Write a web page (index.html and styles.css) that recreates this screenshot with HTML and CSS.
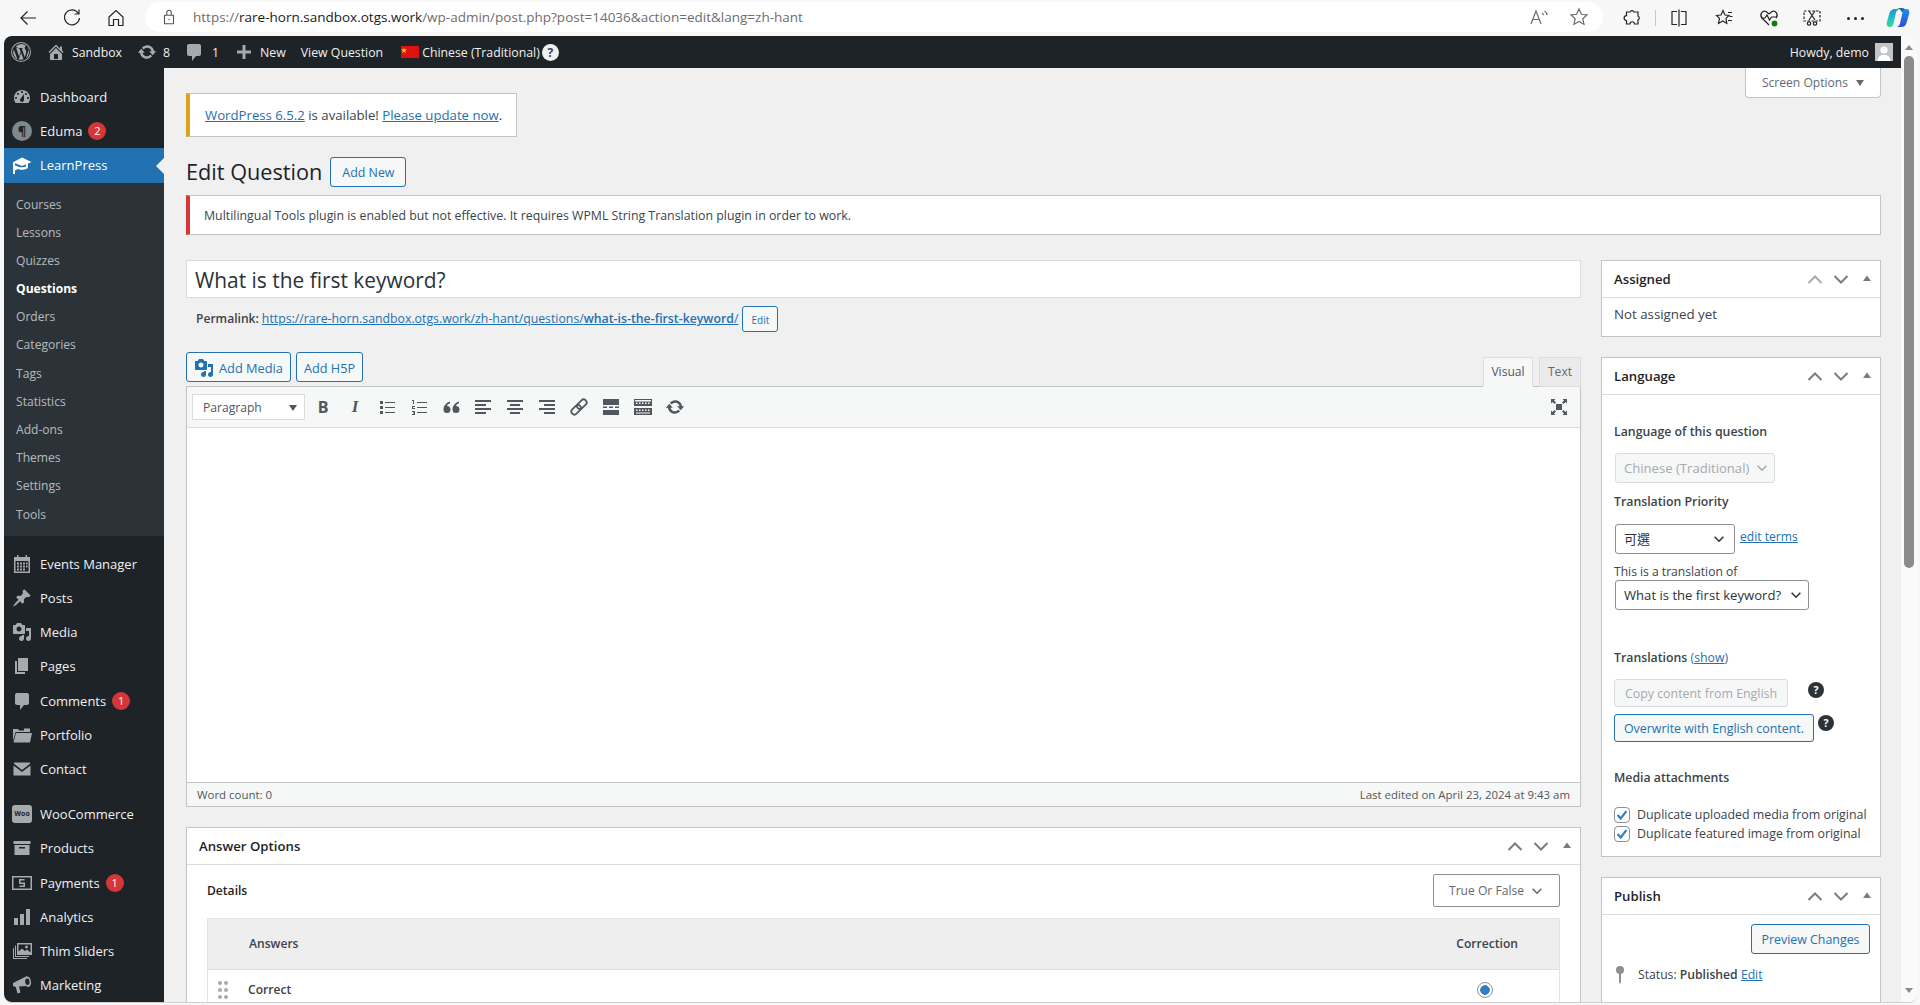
FILE: index.html
```html
<!DOCTYPE html>
<html lang="en">
<head>
<meta charset="utf-8">
<title>Edit Question</title>
<link rel="stylesheet" href="styles.css">
</head>
<body>
<svg class="sprite" xmlns="http://www.w3.org/2000/svg">
  <symbol id="i-home" viewBox="0 0 20 20"><path d="M16 8.5l1.53 1.53-1.06 1.06L10 4.62l-6.47 6.47-1.06-1.06L10 2.5l4 4v-2h2v4zm-6-2.46l6 5.99V18H4v-5.97zM12 17v-5H8v5h4z"/></symbol>
  <symbol id="i-update" viewBox="0 0 20 20"><path d="M10.2 3.28c3.53 0 6.43 2.61 6.92 6h2.08l-3.5 4-3.5-4h2.32c-.45-1.97-2.21-3.45-4.32-3.45-1.45 0-2.73.71-3.54 1.78L4.95 5.66C6.23 4.2 8.11 3.28 10.2 3.28zm-.4 13.44c-3.52 0-6.43-2.61-6.92-6H.8l3.5-4c1.17 1.33 2.33 2.67 3.5 4H5.48c.45 1.97 2.21 3.45 4.32 3.45 1.45 0 2.73-.71 3.54-1.78l1.71 1.95c-1.28 1.46-3.15 2.38-5.25 2.38z"/></symbol>
  <symbol id="i-comment" viewBox="0 0 20 20"><path d="M5 2h10c1.1 0 2 .9 2 2v8c0 1.1-.9 2-2 2h-3l-4 5v-5H5c-1.1 0-2-.9-2-2V4c0-1.1.9-2 2-2z"/></symbol>
  <symbol id="i-plus" viewBox="0 0 20 20"><path d="M17 8.500v3h-5.500V17h-3v-5.500H3v-3h5.500V3h3v5.500z"/></symbol>
  <symbol id="i-dash" viewBox="0 0 20 20"><path fill-rule="evenodd" d="M3.76 16h12.48c1.1-1.37 1.76-3.11 1.76-5 0-4.42-3.58-8-8-8s-8 3.58-8 8c0 1.89.66 3.63 1.76 5zM10 4c.55 0 1 .45 1 1s-.45 1-1 1-1-.45-1-1 .45-1 1-1zM6 6c.55 0 1 .45 1 1s-.45 1-1 1-1-.45-1-1 .45-1 1-1zm8 0c.55 0 1 .45 1 1s-.45 1-1 1-1-.45-1-1 .45-1 1-1zm-5.370 5.550L12 7v6c0 1.100-.9 2-2 2s-2-.9-2-2c0-.57.24-1.080.63-1.450zM4 10c.55 0 1 .45 1 1s-.45 1-1 1-1-.45-1-1 .45-1 1-1zm12 0c.55 0 1 .45 1 1s-.45 1-1 1-1-.45-1-1 .45-1 1-1z"/></symbol>
  <symbol id="i-cap" viewBox="0 0 20 20"><path d="M10 2.500L19.500 7 10 11 3 8.200v2.300l3 .9 0 0c0 0 1.500.9 4 .9s4-1 4-1v-2l2-.8V13c0 0-2.500 1.800-6 1.800-1.500 0-3-.4-4-.8l-3 1.500V19H1V7.300z"/></symbol>
  <symbol id="i-cal" viewBox="0 0 20 20"><path fill-rule="evenodd" d="M5 1h1.500v2h7V1H15v2h3v16H2V3h3zM3.500 7v10.500h13V7z"/><path d="M5 8.500h2v2H5zm3 0h2v2H8zm3 0h2v2h-2zm3 0h1.500v2H14zM5 11.500h2v2H5zm3 0h2v2H8zm3 0h2v2h-2zm3 0h1.500v2H14zM5 14.500h2v2H5zm3 0h2v2H8zm3 0h2v2h-2z"/></symbol>
  <symbol id="i-pin" viewBox="0 0 20 20"><path d="M10.440 3.020l1.820-1.820 6.360 6.350-1.830 1.820c-1.050-.68-2.480-.57-3.410.36l-.75.75c-.92.93-1.040 2.350-.35 3.410l-1.830 1.820-2.410-2.410-2.800 2.790c-.42.42-3.380 2.710-3.800 2.290s1.860-3.390 2.280-3.810l2.790-2.790L4.100 9.360l1.830-1.820c1.050.69 2.480.57 3.400-.36l.75-.75c.93-.92 1.050-2.350.36-3.410z"/></symbol>
  <symbol id="i-media" viewBox="0 0 20 20"><path fill-rule="evenodd" d="M13 11V4c0-.55-.45-1-1-1h-1.670L9 1H5L3.670 3H2c-.55 0-1 .45-1 1v7c0 .55.45 1 1 1h10c.55 0 1-.45 1-1zM7 4.500c1.380 0 2.500 1.120 2.500 2.500S8.380 9.500 7 9.500 4.500 8.380 4.500 7 5.620 4.500 7 4.500z"/><path d="M14 6h5v10.500c0 1.380-1.120 2.500-2.500 2.500S14 17.880 14 16.500s1.120-2.500 2.500-2.500c.17 0 .34.02.5.05V9h-3V6zm-4 8.050V13h2v3.500c0 1.380-1.120 2.500-2.500 2.500S7 17.880 7 16.500 8.120 14 9.500 14c.17 0 .34.020.5.050z"/></symbol>
  <symbol id="i-page" viewBox="0 0 20 20"><path d="M6 15V2h10v13H6zm-1 1h8v2H3V5h2v11z"/></symbol>
  <symbol id="i-folder" viewBox="0 0 20 20"><path d="M1 4h5l1 1.500h5V3.500h6V7H3.500L1 16zM4 8h16l-2 9.500H1.500z"/></symbol>
  <symbol id="i-mail" viewBox="0 0 20 20"><path d="M2 3.500h16v1.300L10 11 2 4.800zM1.500 6.500L10 13l8.500-6.500V16.500h-17z"/></symbol>
  <symbol id="i-archive" viewBox="0 0 20 20"><path fill-rule="evenodd" d="M1.500 3h17v3h-17zM2.500 7h15v10h-15zM7 9v1.500h6V9z"/></symbol>
  <symbol id="i-pay" viewBox="0 0 20 20"><path fill-rule="evenodd" d="M0 3h20v14H0zM1.500 4.500v11h17v-11z"/><path d="M7 6h5.500v1.500H8.500v2H13V14H7.500v-1.500h4v-1.500H7z"/></symbol>
  <symbol id="i-bars" viewBox="0 0 20 20"><path d="M2 11h4v7H2zM8 7h4v11H8zM14 2h4v16h-4z"/></symbol>
  <symbol id="i-slider" viewBox="0 0 20 20"><path fill-rule="evenodd" d="M5 2h15v12H5zM6.500 3.500v7l3.500-3 3 2.500 2-1.500 3.500 3v-8zM14.500 4.500a1.500 1.500 0 1 0 .01 0z"/><path d="M3 4.500h1v10.500h13v1H3zM1 7h1v10h13v1H1z"/></symbol>
  <symbol id="i-mega" viewBox="0 0 20 20"><path fill-rule="evenodd" d="M14 1.500c2.500-.8 4.500 1.500 5 5 .3 3-.8 5.500-3 5.500l-2-1-7 .5 1.500 6L5.500 18.500 3.800 12 1 11V8zM15 3.500c-1.200.2-2 1.500-1.800 3.500.2 2 1.300 3.300 2.600 3s2-1.500 1.800-3.500-1.400-3.200-2.600-3z"/></symbol>
  <symbol id="i-wp" viewBox="0 0 20 20"><path fill-rule="evenodd" d="M10 0a10 10 0 1 0 0 20a10 10 0 0 0 0-20zM10 1a9 9 0 1 1 0 18a9 9 0 0 1 0-18z"/><path d="M10 2a8 8 0 0 1 5.400 2.100c-1-.1-1.700.8-1.700 1.600 0 .8.500 1.400 1 2.300.4.700.6 1.500.4 2.800l-1.300 4.400-2.900-8.500c.3 0 .9-.1.9-.1.400 0 .4-.7 0-.7 0 0-1.200.1-2 .1-.8 0-2-.1-2-.1-.4 0-.4.700 0 .7.300 0 .7.100.7.100l1.100 3-1.600 4.700L5.300 6c.3 0 .9-.1.900-.1.400 0 .4-.7 0-.7 0 0-1.200.1-1.900.1A8 8 0 0 1 10 2zM2.800 7.400l3.700 10a8 8 0 0 1-3.700-10zM10.100 10.800l2.400 6.500a8 8 0 0 1-4.800.1zM16.700 5.700a8 8 0 0 1-1.900 10.700l2.300-6.700c.4-1.200.5-2.100.5-3 0-.300 0-.7-.9-1z"/></symbol>
  <symbol id="i-chev" viewBox="0 0 16 16"><path d="M3 5.500l5 5 5-5" fill="none" stroke="currentColor" stroke-width="1.800"/></symbol>
  <symbol id="i-up" viewBox="0 0 20 20"><path d="M3.500 14L10 7.500 16.500 14" fill="none" stroke="currentColor" stroke-width="2"/></symbol>
  <symbol id="i-down" viewBox="0 0 20 20"><path d="M3.500 7L10 13.500 16.500 7" fill="none" stroke="currentColor" stroke-width="2"/></symbol>
  <symbol id="i-tri" viewBox="0 0 20 20"><path d="M10 6.500l4 5.500H6z"/></symbol>
</svg>

<header class="browser">
  <div class="nav-icons">
    <svg class="b-ic" viewBox="0 0 20 20"><path d="M18 10H3M9.500 3.500L3 10l6.500 6.500"/></svg>
    <svg class="b-ic" viewBox="0 0 20 20"><path d="M16.500 5.500A7.500 7.500 0 1 0 17.500 10M17 1.500v4.500h-4.500"/></svg>
    <svg class="b-ic" viewBox="0 0 20 20"><path d="M3 9l7-6.500L17 9v8.500h-4.500V11.500h-5v6H3z"/></svg>
  </div>
  <div class="urlbar">
    <svg class="b-ic lock" viewBox="0 0 20 20"><path d="M5 8h10v9.500H5zM7.500 8V5a2.500 2.500 0 0 1 5 0v3M10 12v1.500"/></svg>
    <span class="url"><span class="url-dim">https://</span>rare-horn.sandbox.otgs.work<span class="url-dim">/wp-admin/post.php?post=14036&amp;action=edit&amp;lang=zh-hant</span></span>
    <span class="url-end">
      <svg class="b-ic grey" viewBox="0 0 20 20"><path d="M2 17L7 4l5 13M3.800 12.500h6.500M13 6c1 .5 1.500 1.300 1.500 2.300M15.500 4c1.500 1 2.500 2.500 2.500 4"/></svg>
      <svg class="b-ic grey" viewBox="0 0 20 20"><path d="M10 2l2.400 5.300 5.600.6-4.200 3.800 1.200 5.700L10 14.500l-5 2.900 1.200-5.700L2 7.900l5.600-.6z"/></svg>
    </span>
  </div>
  <div class="tools">
    <svg class="b-ic" viewBox="0 0 20 20"><path d="M8 4a2.200 2.200 0 0 1 4 0h4v4a2.200 2.200 0 0 1 0 4v4h-3.500a2.200 2.200 0 0 0-4.500 0H4.500v-3.500a2.200 2.200 0 0 1 0-4.800V4z"/></svg>
    <span class="tool-sep"></span>
    <svg class="b-ic" viewBox="0 0 20 20"><path d="M8 3.500H3v13h5M12 3.500h5v13h-5M10 1.500v17"/></svg>
    <svg class="b-ic" viewBox="0 0 20 20"><path d="M9 2.500l2 4.500 4 .4-3 3 .8 5-4-2.400-4.300 2.400 1-5-3-3 4.500-.4zM14 4.500h4M15.500 8.500h3M14 12.500h4"/></svg>
    <svg class="b-ic heart" viewBox="0 0 20 20"><path d="M10 17L3 10c-3-3.500.5-8 4-6.500L10 6l3-2.500c3.500-1.500 7 3 4 6.500M2 10h4l2-3 2.500 5 2-3h5"/><circle class="heart-ok" cx="15.500" cy="15.500" r="3.500"/></svg>
    <svg class="b-ic b-snip" viewBox="0 0 20 20"><path stroke-dasharray="2.500 1.500" d="M2 3h16v10H2z"/><path d="M7 3l6 9M13 3l-6 9"/><circle cx="7" cy="15.500" r="1.700"/><circle cx="13" cy="15.500" r="1.700"/></svg>
    <span class="dots"><i></i><i></i><i></i></span>
    <svg class="copilot" viewBox="0 0 24 24"><defs><linearGradient id="cp1" x1="0" y1="0" x2="0" y2="1"><stop offset="0" stop-color="#1f8fe0"/><stop offset=".55" stop-color="#1fc4c0"/><stop offset="1" stop-color="#3ad88e"/></linearGradient><linearGradient id="cp2" x1="0" y1="0" x2="0" y2="1"><stop offset="0" stop-color="#1f8fe8"/><stop offset="1" stop-color="#2a50d8"/></linearGradient></defs><path fill="#1a6a9a" d="M11 2h5c2 0 3.300 1 3.800 3l.5 2-4.500-1c-.8-2-2.300-3.200-4.800-4z"/><path fill="url(#cp1)" d="M9 3h4c-1.700.7-2.700 2.300-3.200 4.300L7.500 17.500C7 20 5.500 21 4 21c-2.700 0-3.800-2-3.200-4.500l2.500-9C4.200 4.500 6 3 9 3z"/><path fill="url(#cp2)" d="M15 21h-4c1.700-.7 2.700-2.300 3.200-4.300L16.500 6.500C17 4 18.500 3 20 3c2.700 0 3.800 2 3.200 4.500l-2.500 9C19.800 19.500 18 21 15 21z"/></svg>
  </div>
</header>

<div class="window">
  <div class="page">
    <div class="adminbar">
      <svg class="ab-wp ab-ic"><use href="#i-wp"/></svg>
      <svg class="ab-home ab-ic"><use href="#i-home"/></svg>
      <span class="ab-site">Sandbox</span>
      <svg class="ab-upd ab-ic"><use href="#i-update"/></svg>
      <span class="ab-n8">8</span>
      <svg class="ab-com ab-ic"><use href="#i-comment"/></svg>
      <span class="ab-n1">1</span>
      <svg class="ab-plus ab-ic"><use href="#i-plus"/></svg>
      <span class="ab-new">New</span>
      <span class="ab-view">View Question</span>
      <svg class="ab-flag" viewBox="0 0 18 12"><rect width="18" height="12" fill="#e01010"/><path d="M3 1.500l.7 2.100H6L4.200 4.900l.7 2.100L3 5.700 1.200 7l.7-2.100L0 3.600h2.300z" fill="#ffde00"/></svg>
      <span class="ab-lang">Chinese (Traditional)</span>
      <span class="ab-help">?</span>
      <span class="ab-howdy">Howdy, demo</span>
      <svg class="ab-avatar" viewBox="0 0 18 18"><rect width="18" height="18" fill="#c4c4c4"/><circle cx="9" cy="7" r="3.600" fill="#fff"/><path d="M2.500 18c0-4.500 3-6 6.500-6s6.500 1.500 6.500 6z" fill="#fff"/></svg>
    </div>

    <div class="below">
      <nav class="side">
        <a class="mi"><svg class="mi-ic"><use href="#i-dash"/></svg>Dashboard</a>
        <a class="mi"><span class="mi-round">¶</span>Eduma<span class="badge">2</span></a>
        <a class="mi mi-current"><svg class="mi-ic"><use href="#i-cap"/></svg>LearnPress</a>
        <div class="sub">
          <a>Courses</a><a>Lessons</a><a>Quizzes</a><a class="sub-on">Questions</a><a>Orders</a><a>Categories</a><a>Tags</a><a>Statistics</a><a>Add-ons</a><a>Themes</a><a>Settings</a><a>Tools</a>
        </div>
        <a class="mi mi-gap"><svg class="mi-ic"><use href="#i-cal"/></svg>Events Manager</a>
        <a class="mi"><svg class="mi-ic"><use href="#i-pin"/></svg>Posts</a>
        <a class="mi"><svg class="mi-ic"><use href="#i-media"/></svg>Media</a>
        <a class="mi"><svg class="mi-ic"><use href="#i-page"/></svg>Pages</a>
        <a class="mi mi-tall"><svg class="mi-ic"><use href="#i-comment"/></svg>Comments<span class="badge">1</span></a>
        <a class="mi"><svg class="mi-ic"><use href="#i-folder"/></svg>Portfolio</a>
        <a class="mi"><svg class="mi-ic"><use href="#i-mail"/></svg>Contact</a>
        <a class="mi mi-gap"><span class="mi-woo">Woo</span>WooCommerce</a>
        <a class="mi"><svg class="mi-ic"><use href="#i-archive"/></svg>Products</a>
        <a class="mi mi-tall"><svg class="mi-ic"><use href="#i-pay"/></svg>Payments<span class="badge">1</span></a>
        <a class="mi"><svg class="mi-ic"><use href="#i-bars"/></svg>Analytics</a>
        <a class="mi"><svg class="mi-ic"><use href="#i-slider"/></svg>Thim Sliders</a>
        <a class="mi"><svg class="mi-ic"><use href="#i-mega"/></svg>Marketing</a>
      </nav>

      <main class="content">
        <div class="screen-opts">Screen Options<span class="caret"></span></div>
        <div class="notice-update"><a>WordPress 6.5.2</a> is available! <a>Please update now</a>.</div>
        <div class="heading"><h1>Edit Question</h1><span class="btn btn-new">Add New</span></div>
        <div class="notice-error">Multilingual Tools plugin is enabled but not effective. It requires WPML String Translation plugin in order to work.</div>

        <div class="columns">
          <div class="col-main">
            <div class="title-input">What is the first keyword?</div>
            <div class="permalink"><strong>Permalink:</strong><a class="perma-link">https://rare-horn.sandbox.otgs.work/zh-hant/questions/<b>what-is-the-first-keyword</b>/</a><span class="btn btn-edit">Edit</span></div>

            <div class="ed-top">
              <span class="btn btn-media"><svg class="btn-ic"><use href="#i-media"/></svg>Add Media</span>
              <span class="btn btn-h5p">Add H5P</span>
              <span class="tab tab-on">Visual</span>
              <span class="tab">Text</span>
            </div>
            <div class="editor">
              <div class="ed-bar">
                <div class="ed-format">Paragraph<span class="caret caret-dark"></span></div>
                <span class="tb tb-b">B</span>
                <span class="tb tb-i">I</span>
                <span class="tb"><svg class="tb-ic" viewBox="0 0 20 20"><path d="M3 4h3v3H3zM3 9h3v3H3zM3 14h3v3H3zM8 5h10v1H8zM8 10h10v1H8zM8 15h10v1H8z"/></svg></span>
                <span class="tb"><svg class="tb-ic" viewBox="0 0 20 20"><path d="M3 3h2v4H4V4H3zM3 9h3v1H4v1h2v1H3v-2h1.500V10H3zM3 14h3v4H3v-1h2v-.5H4v-1h1V15H3zM8 5h10v1H8zM8 10h10v1H8zM8 15h10v1H8z"/></svg></span>
                <span class="tb"><svg class="tb-ic" viewBox="0 0 20 20"><path d="M9 4.500C5.500 5.500 2.500 8.500 2.500 12.500a3.500 3.500 0 1 0 3.500-3.500c.4-1.200 1.500-2.200 3-2.700zM18 4.500c-3.500 1-6.500 4-6.500 8a3.500 3.500 0 1 0 3.500-3.500c.4-1.200 1.500-2.200 3-2.700z"/></svg></span>
                <span class="tb"><svg class="tb-ic" viewBox="0 0 20 20"><path d="M2 3h16v2H2zM2 7h11v2H2zM2 11h16v2H2zM2 15h11v2H2z"/></svg></span>
                <span class="tb"><svg class="tb-ic" viewBox="0 0 20 20"><path d="M2 3h16v2H2zM5 7h10v2H5zM2 11h16v2H2zM5 15h10v2H5z"/></svg></span>
                <span class="tb"><svg class="tb-ic" viewBox="0 0 20 20"><path d="M2 3h16v2H2zM7 7h11v2H7zM2 11h16v2H2zM7 15h11v2H7z"/></svg></span>
                <span class="tb"><svg class="tb-ic tb-link" viewBox="0 0 20 20"><g transform="rotate(-45 10 10)"><rect x="0.500" y="7" width="11" height="6" rx="3"/><rect x="8.500" y="7" width="11" height="6" rx="3"/></g></svg></span>
                <span class="tb"><svg class="tb-ic" viewBox="0 0 20 20"><path d="M2 2h16v6H2zM2 9.500h4v1.500H2zM8 9.500h4v1.500H8zM14 9.500h4v1.500h-4zM2 13h16v5H2z"/></svg></span>
                <span class="tb"><svg class="tb-ic" viewBox="0 0 20 20"><path fill-rule="evenodd" d="M1 2h18v7H1zM2 3v1.500h16V3zM3 5.500v1.500h1.500V5.500zM6 5.500v1.500h1.500V5.500zM9 5.500v1.500h1.500V5.500zM12 5.500v1.500h1.500V5.500zM15 5.500v1.500h1.500V5.500zM1 11h18v7H1zM3 12.500v1.500h1.500v-1.500zM6 12.500v1.500h1.500v-1.500zM9 12.500v1.500h1.500v-1.500zM12 12.500v1.500h1.500v-1.500zM15 12.500v1.500h1.500v-1.500zM3 15.500v1h14v-1z"/></svg></span>
                <span class="tb"><svg class="tb-ic"><use href="#i-update"/></svg></span>
                <span class="tb tb-full"><svg class="tb-ic" viewBox="0 0 20 20"><path d="M7 7h6v6H7zM2 2h4.500L5 3.500 7 5.500 5.500 7l-2-2L2 6.500zM18 2v4.500L16.500 5l-2 2L13 5.500l2-2L13.500 2zM2 18v-4.500L3.500 15l2-2L7 14.500l-2 2L6.500 18zM18 18h-4.500l1.500-1.500-2-2 1.500-1.500 2 2 1.500-1.500z"/></svg></span>
              </div>
              <div class="ed-body"></div>
              <div class="ed-status"><span>Word count: 0</span><span>Last edited on April 23, 2024 at 9:43 am</span></div>
            </div>

            <section class="box box-answers">
              <header class="box-head"><h2>Answer Options</h2><span class="box-ctrls"><svg class="ctl"><use href="#i-up"/></svg><svg class="ctl"><use href="#i-down"/></svg><svg class="ctl ctl-tri"><use href="#i-tri"/></svg></span></header>
              <div class="ans-body">
                <div class="ans-top"><span class="ans-details">Details</span><span class="ans-type">True Or False<svg class="chev"><use href="#i-chev"/></svg></span></div>
                <div class="ans-table">
                  <div class="ans-head"><span>Answers</span><span>Correction</span></div>
                  <div class="ans-row">
                    <span class="grip"><i></i><i></i><i></i><i></i><i></i><i></i></span>
                    <span class="ans-name">Correct</span>
                    <span class="radio"></span>
                  </div>
                </div>
              </div>
            </section>
          </div>

          <aside class="col-side">
            <section class="box">
              <header class="box-head"><h2>Assigned</h2><span class="box-ctrls"><svg class="ctl ctl-dim"><use href="#i-up"/></svg><svg class="ctl"><use href="#i-down"/></svg><svg class="ctl ctl-tri"><use href="#i-tri"/></svg></span></header>
              <div class="assigned">Not assigned yet</div>
            </section>

            <section class="box">
              <header class="box-head"><h2>Language</h2><span class="box-ctrls"><svg class="ctl"><use href="#i-up"/></svg><svg class="ctl"><use href="#i-down"/></svg><svg class="ctl ctl-tri"><use href="#i-tri"/></svg></span></header>
              <div class="lang">
                <div class="lbl lbl-first">Language of this question</div>
                <div class="sel sel-off">Chinese (Traditional)<svg class="chev"><use href="#i-chev"/></svg></div>
                <div class="lbl lbl-prio">Translation Priority</div>
                <div class="prio-row"><div class="sel sel-prio">可選<svg class="chev"><use href="#i-chev"/></svg></div><a>edit terms</a></div>
                <div class="plain">This is a translation of</div>
                <div class="sel sel-of">What is the first keyword?<svg class="chev"><use href="#i-chev"/></svg></div>
                <div class="lbl lbl-trans">Translations <span class="show">(<a>show</a>)</span></div>
                <div class="copy-row"><span class="btn btn-off">Copy content from English</span><span class="q q-a">?</span></div>
                <div class="copy-row copy-row-2"><span class="btn btn-over">Overwrite with English content.</span><span class="q q-b">?</span></div>
                <div class="lbl lbl-media">Media attachments</div>
                <div class="chk chk-1"><span class="cb"><svg viewBox="0 0 16 16"><path d="M3 8l3.500 4L13 3.500"/></svg></span>Duplicate uploaded media from original</div>
                <div class="chk"><span class="cb"><svg viewBox="0 0 16 16"><path d="M3 8l3.500 4L13 3.500"/></svg></span>Duplicate featured image from original</div>
              </div>
            </section>

            <section class="box box-last">
              <header class="box-head"><h2>Publish</h2><span class="box-ctrls"><svg class="ctl"><use href="#i-up"/></svg><svg class="ctl"><use href="#i-down"/></svg><svg class="ctl ctl-tri"><use href="#i-tri"/></svg></span></header>
              <div class="pub">
                <div class="pub-btn"><span class="btn btn-preview">Preview Changes</span></div>
                <div class="pub-status"><svg class="pub-pin" viewBox="0 0 12 20"><circle cx="6" cy="5" r="4"/><path d="M5 8h2v9l-1 2-1-2z"/></svg><span>Status: <b>Published</b> <a>Edit</a></span></div>
              </div>
            </section>
          </aside>
        </div>
      </main>
    </div>
  </div>

  <div class="scrollbar">
    <span class="sb-up"></span>
    <span class="sb-thumb"></span>
    <span class="sb-down"></span>
  </div>
</div>
</body>
</html>
```

FILE: styles.css
```css
* { box-sizing: border-box; }
html, body { margin: 0; height: 100%; }
body {
  display: flex;
  flex-direction: column;
  height: 1005px;
  overflow: hidden;
  background: #f7f7f7;
  font-family: "Open Sans", "Noto Sans CJK TC", sans-serif;
  font-size: 12.1px;
  line-height: 18px;
  color: #3c434a;
}
a { color: #2271b1; text-decoration: underline; }
.sprite { display: none; }
svg { fill: currentColor; }

/* browser chrome */
.browser { height: 36px; flex: none; display: flex; align-items: center; }
.nav-icons { display: flex; width: 145px; padding-left: 18px; gap: 24px; }
.b-ic { width: 20px; height: 20px; fill: none; stroke: #242424; stroke-width: 1.2; flex: none; }
.b-ic.grey { stroke: #6b6b6b; }
.urlbar { width: 1458px; height: 30px; margin-top: -2px; background: #fff; border-radius: 15px; display: flex; align-items: center; padding-left: 15px; }
.lock { width: 18px; height: 18px; stroke: #555; }
.url { margin-left: 15px; font-size: 13.500px; color: #1b1b1b; white-space: nowrap; }
.url-dim { color: #6e6e6e; }
.url-end { margin-left: auto; display: flex; gap: 20px; padding-right: 14px; }
.tools { display: flex; align-items: center; margin-left: 19px; }
.tools .b-ic { margin-right: 25px; }
.tools .b-snip { margin-left: -2px; margin-right: 27px; }
.tool-sep { width: 1px; height: 16px; background: #c8c8c8; margin: 0 13px 0 -12px; }
.heart-ok { fill: #107c10; stroke: #f7f7f7; }
.dots { display: flex; gap: 4px; margin: 0 26px 0 -2px; width: 16px; }
.dots i { width: 3px; height: 3px; border-radius: 50%; background: #242424; flex: none; }
.copilot { width: 24px; height: 24px; flex: none; margin-left: -3px; }

/* window */
.window { flex: none; height: 966px; margin: 0 3px 0 4px; display: flex; border-radius: 8px; overflow: hidden; box-shadow: 0 1px 0 #d0d0d0; }
.page { flex: 1; min-width: 0; display: flex; flex-direction: column; background: #f0f0f1; }
.scrollbar { width: 16px; flex: none; background: #fafafa; display: flex; flex-direction: column; align-items: center; padding-top: 9px; }
.sb-up { width: 0; height: 0; border: 4.500px solid transparent; border-top: 0; border-bottom: 5px solid #8a8a8a; }
.sb-thumb { width: 10px; height: 512px; margin-top: 6px; background: #8b8b8b; border-radius: 5px; }
.sb-down { width: 0; height: 0; border: 4.500px solid transparent; border-bottom: 0; border-top: 5px solid #8a8a8a; margin-top: auto; margin-bottom: 9px; }

/* admin bar */
.adminbar { height: 32px; flex: none; padding-top: 1px; background: #1d2327; color: #f0f0f1; display: flex; align-items: center; font-size: 12.300px; white-space: nowrap; }
.ab-ic { width: 20px; height: 20px; margin-top: -1px; color: #a7aaad; flex: none; }
.ab-wp { margin-left: 7px; }
.ab-home { margin-left: 15px; }
.ab-site { margin-left: 6px; }
.ab-upd { margin-left: 15px; }
.ab-n8 { margin-left: 6px; }
.ab-com { margin-left: 14px; }
.ab-n1 { margin-left: 8px; }
.ab-plus { margin-left: 15px; }
.ab-new { margin-left: 6px; }
.ab-view { margin-left: 15px; }
.ab-flag { width: 18px; height: 12px; margin: -1px 0 0 18px; flex: none; }
.ab-lang { margin-left: 3px; }
.ab-help { width: 17px; height: 17px; margin: -1px 0 0 2px; border-radius: 50%; background: #f0f0f1; color: #3c434a; font-weight: 700; font-size: 12px; line-height: 17px; text-align: center; }
.ab-howdy { margin-left: auto; }
.ab-avatar { width: 18px; height: 18px; margin: -1px 8px 0 6px; flex: none; }

/* layout below bar */
.below { flex: 1; min-height: 0; display: flex; }
.side { width: 160px; flex: none; background: #1d2327; padding-top: 12px; overflow: hidden; }
.mi { height: 34px; display: flex; align-items: center; padding-left: 8px; color: #f0f0f1; text-decoration: none; font-size: 13px; position: relative; }
.mi-ic { width: 20px; height: 20px; color: #a7aaad; margin-right: 8px; flex: none; }
.mi-tall { height: 35px; padding-top: 1px; }
.mi-gap { margin-top: 11px; }
.mi-current { height: 35px; padding-bottom: 1px; background: #2271b1; color: #fff; }
.mi-current .mi-ic { color: #fff; }
.mi-current::after { content: ""; position: absolute; right: 0; top: 50%; margin-top: -8px; border: 8px solid transparent; border-left: 0; border-right-color: #f0f0f1; }
.mi-round { width: 20px; height: 20px; border-radius: 50%; margin-right: 8px; background: #7c8a90; color: #1d2327; font-weight: 700; font-size: 13px; line-height: 20px; text-align: center; flex: none; }
.mi-woo { width: 20px; height: 18px; margin-right: 8px; border-radius: 3px; background: #a7aaad; color: #1d2327; font-size: 7px; line-height: 18px; font-weight: 700; text-align: center; flex: none; }
.badge { width: 18px; height: 18px; margin-left: 6px; border-radius: 50%; background: #d63638; color: #fff; font-size: 11px; line-height: 18px; text-align: center; }
.sub { background: #2c3338; padding: 7.500px 0 7.100px; }
.sub a { display: block; height: 28.200px; line-height: 28.200px; padding-left: 12px; font-size: 12.1px; color: rgba(240, 246, 252, .7); text-decoration: none; }
.sub a.sub-on { color: #fff; font-weight: 700; }

/* content */
.content { flex: 1; min-width: 0; overflow: hidden; padding: 0 20px 0 22px; }
.screen-opts { float: right; width: 136px; height: 30px; background: #fff; border: 1px solid #c3c4c7; border-top: 0; border-radius: 0 0 4px 4px; display: flex; align-items: center; justify-content: center; color: #646970; }
.caret { border: 4px solid transparent; border-bottom: 0; border-top: 6px solid #646970; margin-left: 8px; }
.notice-update { display: inline-block; margin-top: 25px; height: 44px; padding: 0 14px 0 15px; line-height: 42px; background: #fff; border: 1px solid #c3c4c7; border-left: 4px solid #dba617; font-size: 13.200px; }
.heading { display: flex; align-items: center; margin-top: 20px; height: 30px; }
.heading h1 { margin: 0; font-size: 21.700px; font-weight: 400; line-height: 30px; color: #1d2327; }
.btn { display: inline-flex; align-items: center; justify-content: center; padding-top: 1px; background: #f6f7f7; border: 1px solid #2271b1; border-radius: 3px; color: #2271b1; white-space: nowrap; font-size: 12.400px; }
.btn-new { width: 76px; height: 30px; margin-left: 8px; }
.notice-error { margin-top: 8px; height: 40px; padding-left: 14px; line-height: 40px; background: #fff; border: 1px solid #c3c4c7; border-left: 4px solid #d63638; font-size: 12.350px; }

.columns { display: grid; grid-template-columns: 1395px 280px; gap: 20px; margin-top: 25px; }
.col-main, .col-side { min-width: 0; }
.title-input { height: 38px; padding: 0 8px; background: #fff; border: 1px solid #dcdcde; font-size: 20.900px; line-height: 38px; color: #2c3338; }
.permalink { height: 26px; margin-top: 8px; padding-left: 10px; display: flex; align-items: center; white-space: nowrap; }
.permalink strong { font-weight: 600; color: #3c434a; }
.perma-link { margin-left: 3px; font-size: 12.300px; }
.perma-link b { font-weight: 600; }
.btn-edit { width: 36px; height: 26px; margin-left: 4px; font-size: 10px; }

.ed-top { display: flex; align-items: flex-end; margin-top: 20px; height: 35px; position: relative; z-index: 1; margin-bottom: -1px; }
.btn-media { width: 105px; height: 30px; margin-bottom: 5px; font-size: 12.800px; }
.btn-ic { width: 20px; height: 20px; margin-right: 5px; }
.btn-h5p { width: 67px; height: 30px; margin: 0 0 5px 5px; font-size: 12.700px; }
.tab { width: 42px; height: 30px; margin-left: 6px; display: flex; align-items: center; justify-content: center; background: #ebebeb; border: 1px solid #dcdcde; color: #646970; }
.tab-on { width: 50px; margin-left: auto; background: #f6f7f7; border-bottom-color: #f6f7f7; color: #50575e; }
.editor { border: 1px solid #c3c4c7; background: #fff; }
.ed-bar { height: 41px; display: flex; align-items: center; padding-left: 5px; background: #f6f7f7; border-bottom: 1px solid #dcdcde; color: #50575e; }
.ed-format { width: 113px; height: 26px; margin-right: 2px; padding: 1px 7px 0 10px; display: flex; align-items: center; justify-content: space-between; background: #fff; border: 1px solid #dcdcde; flex: none; }
.caret-dark { margin: 0; border-top-color: #50575e; }
.tb { width: 32px; height: 26px; display: flex; align-items: center; justify-content: center; flex: none; }
.tb-ic { width: 20px; height: 20px; }
.tb-link { fill: none; stroke: currentColor; stroke-width: 1.800; }
.tb-b { font-size: 16px; font-weight: 700; }
.tb-i { font-size: 17px; font-weight: 700; font-style: italic; font-family: "Liberation Serif", serif; }
.tb-full { margin-left: auto; margin-right: 5px; }
.ed-body { height: 354px; }
.ed-status { height: 24px; padding: 0 10px; display: flex; align-items: center; justify-content: space-between; background: #f6f7f7; border-top: 1px solid #c3c4c7; font-size: 11.450px; color: #50575e; }

.box { background: #fff; border: 1px solid #c3c4c7; margin-bottom: 20px; }
.box-head { height: 37px; display: flex; align-items: center; justify-content: space-between; border-bottom: 1px solid #dcdcde; padding-left: 12px; }
.box-head h2 { margin: 0; font-size: 13.200px; font-weight: 600; color: #1d2327; }
.box-ctrls { display: flex; width: 78px; align-items: center; }
.ctl { width: 26px; height: 20px; color: #787c82; flex: none; }
.ctl-dim { color: #a7aaad; }
.ctl-tri { width: 26px; color: #787c82; }

.box-answers { margin: 20px 0 0; }
.ans-body { padding: 9px 20px 0 20px; }
.ans-top { height: 33px; display: flex; align-items: center; justify-content: space-between; }
.ans-details { font-weight: 600; color: #1d2327; }
.ans-type { width: 127px; height: 33px; display: flex; align-items: center; justify-content: center; gap: 6px; border: 1px solid #8c8f94; border-radius: 2px; color: #646970; }
.chev { width: 14px; height: 14px; flex: none; }
.ans-table { margin-top: 11px; border: 1px solid #e4e4e4; border-bottom: 0; }
.ans-head { height: 51px; display: flex; align-items: center; justify-content: space-between; padding: 0 41px; background: #eeeeee; border-bottom: 1px solid #dcdcde; font-weight: 600; color: #3c434a; }
.ans-row { height: 40px; display: flex; align-items: center; padding: 0 66px 0 10px; }
.grip { width: 10px; display: grid; grid-template-columns: 3px 3px; gap: 3px; }
.grip i { width: 4px; height: 4px; border-radius: 50%; background: #a7aaad; }
.ans-name { margin-left: 20px; font-weight: 600; }
.radio { width: 16px; height: 16px; margin-left: auto; border: 1px solid #8c8f94; border-radius: 50%; background: radial-gradient(circle, #2e7fc4 0 4.500px, #fff 5px); }

.assigned { height: 38px; padding: 0 12px; line-height: 32px; font-size: 13.300px; }
.lang { padding: 28px 12px 14px; }
.lbl { font-weight: 600; font-size: 12.300px; }
.sel { display: flex; align-items: center; justify-content: space-between; height: 30px; margin-left: 1px; padding: 0 8px; background: #fff; border: 1px solid #8c8f94; border-radius: 3px; color: #2c3338; font-size: 13.100px; }
.sel-off { width: 160px; margin-top: 12px; padding-right: 5px; background: #f6f7f7; border-color: #dcdcde; color: #a7aaad; white-space: nowrap; }
.sel-prio { width: 120px; margin: 0; font-size: 13px; }
.sel-of { width: 194px; white-space: nowrap; padding-right: 5px; }
.lbl-prio { margin-top: 10px; }
.prio-row { display: flex; align-items: flex-start; gap: 5px; margin: 13px 0 0 1px; }
.prio-row a { margin-top: 4px; }
.plain { margin-top: 9px; margin-bottom: -1px; }
.lbl-trans { margin-top: 39px; }
.show { font-weight: 400; color: #2271b1; }
.copy-row { display: flex; align-items: flex-start; margin-top: 12px; }
.copy-row-2 { margin-top: 7px; }
.btn-off { width: 174px; height: 28px; background: #f6f7f7; border-color: #dcdcde; color: #a7aaad; }
.btn-over { width: 200px; height: 28px; }
.q { width: 16px; height: 16px; border-radius: 50%; background: #2c3338; color: #fff; font-size: 10.500px; font-weight: 700; line-height: 16px; text-align: center; flex: none; }
.q-a { margin: 3px 0 0 20px; }
.q-b { margin: 1px 0 0 4px; }
.lbl-media { margin-top: 27px; margin-bottom: -1px; }
.chk { display: flex; align-items: center; height: 16px; white-space: nowrap; margin-top: 3px; font-size: 12.400px; }
.chk-1 { margin-top: 21px; }
.cb { width: 16px; height: 16px; margin-right: 7px; border: 1px solid #8c8f94; border-radius: 4px; background: #fff; flex: none; }
.cb svg { display: block; width: 14px; height: 14px; fill: none; stroke: #2e7fc4; stroke-width: 2.500; }
.box-last { margin-bottom: 0; }
.pub { padding: 9px 10px 30px 12px; }
.pub-btn { display: flex; justify-content: flex-end; }
.btn-preview { width: 119px; height: 30px; }
.pub-status { display: flex; align-items: center; margin-top: 11px; white-space: pre; font-size: 12.200px; }
.pub-status b { font-weight: 600; }
.pub-pin { width: 12px; height: 20px; margin: 0 12px 0 0; color: #8c8f94; flex: none; }
```
